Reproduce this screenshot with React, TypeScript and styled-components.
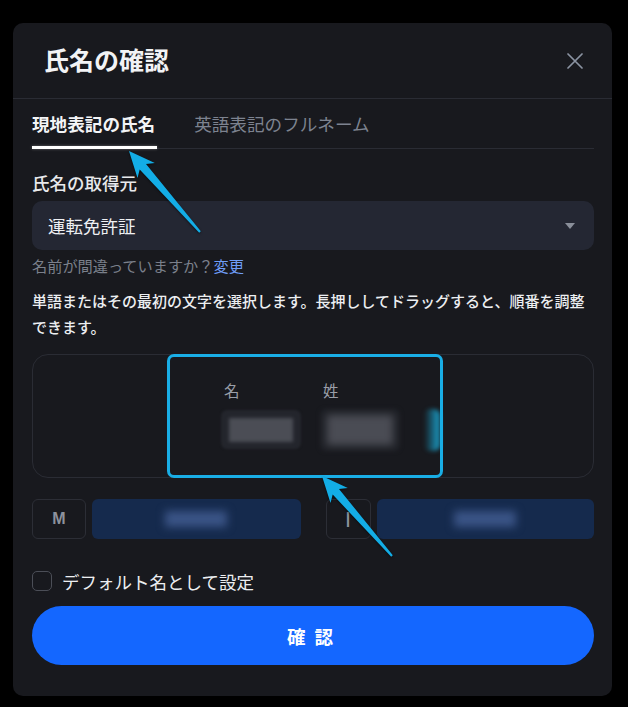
import React from "react";
import styled, { createGlobalStyle } from "styled-components";

const Global = createGlobalStyle`
  html, body { margin: 0; padding: 0; background: #000; }
  body { font-family: "Noto Sans CJK JP", "Noto Sans", sans-serif; }
  * { box-sizing: border-box; }
`;

const Page = styled.div`
  position: relative;
  width: 628px;
  height: 707px;
  padding: 23px 16px 0 13px;
  overflow: hidden;
`;

const Modal = styled.div`
  width: 599px;
  height: 673px;
  background: #18191e;
  border-radius: 10px;
  display: flex;
  flex-direction: column;
`;

const Header = styled.div`
  height: 76px;
  flex: none;
  display: flex;
  align-items: center;
  justify-content: space-between;
  padding: 0 29px 0 31px;
  border-bottom: 1px solid #2a2c34;
`;

const Title = styled.h2`
  margin: 0 0 2px;
  font-size: 25px;
  line-height: 1;
  font-weight: 700;
  color: #f2f3f5;
`;

const CloseButton = styled.button`
  width: 16px;
  height: 16px;
  padding: 0;
  border: 0;
  background: none;
  display: flex;
`;

const Body = styled.div`
  display: flex;
  flex-direction: column;
  padding: 0 18px 0 19px;
`;

const Tabs = styled.div`
  height: 50px;
  display: flex;
  gap: 39px;
  border-bottom: 1px solid #2a2c34;
`;

const Tab = styled.div<{ $active?: boolean }>`
  position: relative;
  display: flex;
  align-items: center;
  font-size: 17.6px;
  font-weight: ${(p) => (p.$active ? 700 : 400)};
  color: ${(p) => (p.$active ? "#f3f4f6" : "#7d8390")};
  &::after {
    content: "";
    display: ${(p) => (p.$active ? "block" : "none")};
    position: absolute;
    left: 0;
    right: -2px;
    bottom: -1px;
    height: 3px;
    background: #ffffff;
    box-shadow: 0 0 3px rgba(255, 255, 255, 0.35);
  }
`;

const FieldLabel = styled.div`
  margin-top: 22px;
  font-size: 17.5px;
  line-height: 24px;
  font-weight: 500;
  color: #e8e9ec;
`;

const Select = styled.div`
  margin-top: 6px;
  height: 49px;
  background: #242733;
  border-radius: 10px;
  padding: 0 19px 0 16px;
  display: flex;
  align-items: center;
  justify-content: space-between;
  font-size: 17.5px;
  color: #eef0f3;
`;

const Caret = styled.span`
  width: 0;
  height: 0;
  border-left: 5px solid transparent;
  border-right: 5px solid transparent;
  border-top: 6px solid #8a8f9a;
`;

const Hint = styled.div`
  margin-top: 4px;
  font-size: 15.2px;
  line-height: 22px;
  color: #7b808b;
`;

const Link = styled.span`
  color: #6f9df7;
`;

const Desc = styled.p`
  margin: 12px 0 0;
  font-size: 15px;
  line-height: 26px;
  font-weight: 500;
  color: #eceef1;
`;

const NameBox = styled.div`
  margin-top: 14px;
  height: 124px;
  border: 1px solid #2a2c34;
  border-radius: 16px;
  padding: 25px 0 0 188px;
  display: flex;
`;

const NameCol = styled.div<{ $gap: number }>`
  display: flex;
  flex-direction: column;
  gap: 9px;
  margin-right: ${(p) => p.$gap}px;
`;

const NameLabel = styled.div`
  height: 20px;
  padding-left: 3px;
  font-size: 15.5px;
  line-height: 20px;
  color: #9a9ea8;
`;

const Chip = styled.div<{ $kind: "plain" | "soft" | "cyan" }>`
  position: relative;
  height: ${(p) => (p.$kind === "plain" ? 39 : 42)}px;
  width: ${(p) => (p.$kind === "cyan" ? 16 : 80)}px;
  border-radius: 6px;
  margin-top: ${(p) => (p.$kind === "plain" ? 1 : 0)}px;
  background: ${(p) =>
    p.$kind === "cyan"
      ? "linear-gradient(90deg, rgba(27,159,199,0) 0%, #1a9fc8 100%)"
      : p.$kind === "soft"
      ? "#202228"
      : "#23252c"};
  filter: blur(${(p) => (p.$kind === "plain" ? 1 : 2)}px);
  display: flex;
  align-items: center;
  justify-content: center;
`;

const Blot = styled.div<{ $w: number; $h: number; $c: string; $blur: number }>`
  width: ${(p) => p.$w}px;
  height: ${(p) => p.$h}px;
  background: ${(p) => p.$c};
  filter: blur(${(p) => p.$blur}px);
`;

const Row = styled.div`
  margin-top: 21px;
  height: 40px;
  display: grid;
  grid-template-columns: 1fr 1fr;
  gap: 25px;
`;

const Group = styled.div`
  display: flex;
  gap: 6px;
`;

const InitialBox = styled.div<{ $w: number }>`
  width: ${(p) => p.$w}px;
  flex: none;
  border: 1px solid #2c2e36;
  border-radius: 6px;
  display: flex;
  align-items: center;
  justify-content: center;
  font-family: "Liberation Sans", "Noto Sans", sans-serif;
  font-size: 16px;
  font-weight: 700;
  color: #8d929c;
`;

const NameField = styled.div`
  flex: 1;
  background: #152a4d;
  border-radius: 6px;
  display: flex;
  align-items: center;
  justify-content: center;
`;

const CheckRow = styled.label`
  margin-top: 32px;
  height: 20px;
  display: flex;
  align-items: center;
  gap: 10px;
  font-size: 17.5px;
  color: #eceef1;
`;

const CheckBox = styled.span`
  width: 20px;
  height: 20px;
  border: 1.5px solid #4b4e57;
  border-radius: 5px;
`;

const ConfirmButton = styled.button`
  margin-top: 15px;
  height: 59px;
  border: 0;
  border-radius: 30px;
  background: #1467ff;
  color: #ffffff;
  font-family: "Noto Sans CJK JP", "Noto Sans", sans-serif;
  font-size: 18.5px;
  font-weight: 700;
  letter-spacing: 9px;
  padding-left: 9px;
`;

const Overlay = styled.div`
  position: absolute;
  inset: 0;
  pointer-events: none;
`;

const Highlight = styled.div`
  position: absolute;
  left: 167px;
  top: 354px;
  width: 276px;
  height: 124px;
  border: 3px solid #19aee6;
  border-radius: 7px;
`;

const ArrowLayer = styled.svg`
  position: absolute;
  left: 0;
  top: 0;
  filter: drop-shadow(0 1px 1px rgba(0, 0, 0, 0.55));
`;

function arrowPoints(tx: number, ty: number, ex: number, ey: number): string {
  const dx = ex - tx;
  const dy = ey - ty;
  const len = Math.hypot(dx, dy);
  const ux = dx / len;
  const uy = dy / len;
  const nx = -uy;
  const ny = ux;
  const headLen = 26;
  const headW = 11.5;
  const neckLen = 21;
  const neckW = 4.2;
  const tailW = 1.1;
  const bx = tx + ux * headLen;
  const by = ty + uy * headLen;
  const cx = tx + ux * neckLen;
  const cy = ty + uy * neckLen;
  const pts: [number, number][] = [
    [tx, ty],
    [bx - nx * headW, by - ny * headW],
    [cx - nx * neckW, cy - ny * neckW],
    [ex - nx * tailW, ey - ny * tailW],
    [ex + nx * tailW, ey + ny * tailW],
    [cx + nx * neckW, cy + ny * neckW],
    [bx + nx * headW, by + ny * headW],
  ];
  return pts.map(([x, y]) => `${x.toFixed(1)},${y.toFixed(1)}`).join(" ");
}

export default function App() {
  return (
    <>
      <Global />
      <Page>
        <Modal>
          <Header>
            <Title>氏名の確認</Title>
            <CloseButton aria-label="close">
              <svg width="16" height="16" viewBox="0 0 16 16">
                <path d="M1 1 L15 15 M15 1 L1 15" stroke="#8b93a2" strokeWidth="1.7" strokeLinecap="round" />
              </svg>
            </CloseButton>
          </Header>
          <Body>
            <Tabs>
              <Tab $active>現地表記の氏名</Tab>
              <Tab>英語表記のフルネーム</Tab>
            </Tabs>
            <FieldLabel>氏名の取得元</FieldLabel>
            <Select>
              <span>運転免許証</span>
              <Caret />
            </Select>
            <Hint>
              名前が間違っていますか？<Link>変更</Link>
            </Hint>
            <Desc>単語またはその最初の文字を選択します。長押ししてドラッグすると、順番を調整できます。</Desc>
            <NameBox>
              <NameCol $gap={19}>
                <NameLabel>名</NameLabel>
                <Chip $kind="plain">
                  <Blot $w={64} $h={24} $c="#4b4d55" $blur={1.5} />
                </Chip>
              </NameCol>
              <NameCol $gap={24}>
                <NameLabel>姓</NameLabel>
                <Chip $kind="soft">
                  <Blot $w={66} $h={30} $c="#4a4c54" $blur={3} />
                </Chip>
              </NameCol>
              <NameCol $gap={0}>
                <NameLabel />
                <Chip $kind="cyan" />
              </NameCol>
            </NameBox>
            <Row>
              <Group>
                <InitialBox $w={54}>M</InitialBox>
                <NameField>
                  <Blot $w={62} $h={16} $c="#3a5486" $blur={4} />
                </NameField>
              </Group>
              <Group>
                <InitialBox $w={45}>|</InitialBox>
                <NameField>
                  <Blot $w={62} $h={16} $c="#3a5486" $blur={4} />
                </NameField>
              </Group>
            </Row>
            <CheckRow>
              <CheckBox />
              デフォルト名として設定
            </CheckRow>
            <ConfirmButton>確認</ConfirmButton>
          </Body>
        </Modal>
        <Overlay>
          <Highlight />
          <ArrowLayer width="628" height="707" viewBox="0 0 628 707">
            <polygon points={arrowPoints(129, 151, 200, 232)} fill="#13ade6" />
            <polygon points={arrowPoints(322, 476, 392, 556)} fill="#13ade6" />
          </ArrowLayer>
        </Overlay>
      </Page>
    </>
  );
}
